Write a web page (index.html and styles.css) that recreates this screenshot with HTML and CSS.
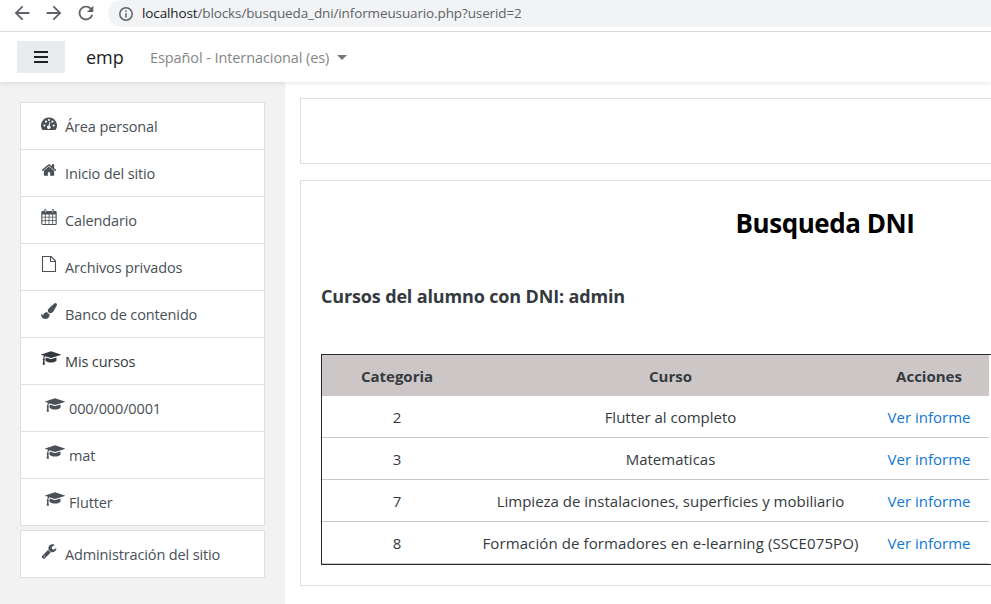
FILE: index.html
```html
<!DOCTYPE html>
<html lang="es">
<head>
<meta charset="utf-8">
<title>Busqueda DNI</title>
<link rel="stylesheet" href="styles.css">
</head>
<body>
<svg width="0" height="0" class="defs">
<symbol id="cap" viewBox="0 0 2304 1792"><path d="M1774 836l18 316q4 69-82 128t-235 93.500-323 34.500-323-34.500-235-93.500-82-128l18-316 574 181q22 7 48 7t48-7zm530-324q0 23-22 31l-1120 352q-4 1-10 1t-10-1l-652-206q-43 34-71 111.500t-34 178.500q63 36 63 109 0 69-58 107l58 433q2 14-8 25-9 11-24 11h-192q-15 0-24-11-10-11-8-25l58-433q-58-38-58-107 0-73 65-111 11-207 98-330l-333-104q-22-8-22-31t22-31l1120-352q4-1 10-1t10 1l1120 352q22 8 22 31z"/></symbol>
</svg>
<header class="browser">
  <svg class="tool" viewBox="0 0 24 24"><path d="M20 11H7.830l5.590-5.590L12 4l-8 8 8 8 1.410-1.410L7.830 13H20z"/></svg>
  <svg class="tool" viewBox="0 0 24 24"><path d="M4 11h12.170l-5.590-5.590L12 4l8 8-8 8-1.410-1.410L16.170 13H4z"/></svg>
  <svg class="tool" viewBox="0 0 24 24"><path d="M17.650 6.350C16.200 4.900 14.210 4 12 4c-4.420 0-7.990 3.580-7.990 8s3.570 8 7.990 8c3.730 0 6.840-2.550 7.730-6h-2.080c-.82 2.330-3.040 4-5.650 4-3.310 0-6-2.690-6-6s2.690-6 6-6c1.660 0 3.140.69 4.220 1.780L13 11h7V4z"/></svg>
  <div class="address">
    <svg class="info" viewBox="0 0 14 14"><circle cx="7" cy="7" r="6.200" fill="none" stroke="#5f6368" stroke-width="1.500"/><path d="M6.250 6.200h1.500v4.200h-1.500zM6.250 3.500h1.500V5h-1.500z"/></svg>
    <span class="url"><b>localhost</b>/blocks/busqueda_dni/informeusuario.php?userid=2</span>
  </div>
</header>
<nav class="navbar">
  <button class="burger"><i></i><i></i><i></i></button>
  <a class="brand">emp</a>
  <a class="lang">Español - Internacional (es)</a>
</nav>
<div class="page">
  <aside class="drawer">
    <ul class="list">
      <li><svg viewBox="0 -1 16 16"><path fill-rule="evenodd" d="M8 1.500a8 8 0 0 0-6.700 12.300q.2.300.6.300h12.200q.4 0 .6-.3A8 8 0 0 0 8 1.500zM3.400 8.400a1.100 1.100 0 1 1 0 2.200 1.100 1.100 0 0 1 0-2.200zM5 4.500a1.100 1.100 0 1 1 0 2.200 1.100 1.100 0 0 1 0-2.200zM8 2.900a1.100 1.100 0 1 1 0 2.200 1.100 1.100 0 0 1 0-2.200zM11.400 4.500a1.100 1.100 0 1 1 0 2.200 1.100 1.100 0 0 1 0-2.200zM12.700 8.400a1.100 1.100 0 1 1 0 2.200 1.100 1.100 0 0 1 0-2.200zM8.500 6l.9.200-.8 3.500a1.700 1.700 0 1 1-1-.2z"/></svg><span>Área personal</span></li>
      <li><svg viewBox="0 0 1792 1792"><path d="M1472 992v480q0 26-19 45t-45 19h-384v-384h-256v384h-384q-26 0-45-19t-19-45v-480q0-1 .5-3t.5-3l575-474 575 474q1 2 1 6zm223-69l-62 74q-8 9-21 11h-3q-13 0-21-7l-692-577-692 577q-12 8-24 7-13-2-21-11l-62-74q-8-10-7-23.500t11-21.500l719-599q32-26 76-26t76 26l244 204v-195q0-14 9-23t23-9h192q14 0 23 9t9 23v408l219 182q10 8 11 21.500t-7 23.500z"/></svg><span>Inicio del sitio</span></li>
      <li><svg viewBox="0 0 16 16"><path fill-rule="evenodd" d="M1.500 2h1.700V1q0-1 1-1t1 1v1h5.600V1q0-1 1-1t1 1v1h1.700q1.200 0 1.200 1.200v11.600q0 1.200-1.200 1.200h-12Q.3 16 .3 14.800V3.200Q.3 2 1.500 2zM1.400 5.400v2.400h2.500V5.400zM4.700 5.400v2.400h2.900V5.400zM8.400 5.400v2.400h2.900V5.400zM12.100 5.400v2.400h2.500V5.400zM1.400 8.600v2.600h2.500V8.600zM4.700 8.600v2.600h2.900V8.600zM8.400 8.600v2.600h2.900V8.600zM12.100 8.600v2.600h2.500V8.600zM1.400 12v2.900h2.500V12zM4.700 12v2.900h2.900V12zM8.400 12v2.900h2.900V12zM12.100 12v2.900h2.500V12zM3.900 1v2.500h.7V1zM11.400 1v2.500h.7V1z"/></svg><span>Calendario</span></li>
      <li><svg viewBox="0 0 16 16"><path fill="none" stroke="#495057" stroke-width="1.100" stroke-linejoin="round" d="M1.500.500h8.500l4.500 4.500v10.500h-13zM9.500.500v5h5"/></svg><span>Archivos privados</span></li>
      <li><svg viewBox="0 0 1792 1792"><path d="M1615 0q70 0 122.500 46.500t52.500 116.500q0 63-45 151-332 629-465 752-97 91-218 91-126 0-216.500-92.500t-90.500-219.500q0-128 92-212l638-579q59-54 130-54zm-909 1034q39 76 106.500 130t150.500 76l1 71q4 213-129.500 347t-348.500 134q-123 0-218-46.500t-152.500-127.500-86.500-183-29-220q7 5 41 30t62 44.500 59 36.500 46 17q41 0 55-37 25-66 57.500-112.500t69.500-76 88-47.500 103-25.500 125-10.500z"/></svg><span>Banco de contenido</span></li>
      <li class="dark"><svg class="cap"><use href="#cap"/></svg><span>Mis cursos</span></li>
      <li class="sub"><svg class="cap"><use href="#cap"/></svg><span>000/000/0001</span></li>
      <li class="sub"><svg class="cap"><use href="#cap"/></svg><span>mat</span></li>
      <li class="sub"><svg class="cap"><use href="#cap"/></svg><span>Flutter</span></li>
    </ul>
    <ul class="list">
      <li><svg viewBox="0 0 1792 1792"><path d="M448 1472q0-26-19-45t-45-19-45 19-19 45 19 45 45 19 45-19 19-45zm644-420l-682 682q-37 37-90 37-52 0-91-37l-106-108q-38-36-38-90 0-53 38-91l681-681q39 98 114.500 173.500t173.500 114.500zm634-435q0 39-23 106-47 134-164.500 217.500t-258.500 83.500q-185 0-316.500-131.500t-131.500-316.500 131.500-316.500 316.500-131.500q58 0 121.500 16.500t107.500 46.500q16 11 16 28t-16 28l-293 169v224l193 107q5-3 79-48.500t135.500-81 70.500-35.500q15 0 23.500 10t8.500 25z"/></svg><span>Administración del sitio</span></li>
    </ul>
  </aside>
  <main class="content">
    <section class="card top"></section>
    <section class="card report">
      <h2>Busqueda DNI</h2>
      <h4>Cursos del alumno con DNI: admin</h4>
      <table>
        <colgroup><col class="c1"><col class="c2"><col class="c3"><col class="c4"></colgroup>
        <thead><tr><th>Categoria</th><th>Curso</th><th>Acciones</th></tr></thead>
        <tbody>
          <tr><td>2</td><td>Flutter al completo</td><td><a>Ver informe</a></td></tr>
          <tr><td>3</td><td>Matematicas</td><td><a>Ver informe</a></td></tr>
          <tr><td>7</td><td>Limpieza de instalaciones, superficies y mobiliario</td><td><a>Ver informe</a></td></tr>
          <tr><td>8</td><td class="wide">Formación de formadores en e-learning (SSCE075PO)</td><td><a>Ver informe</a></td></tr>
        </tbody>
      </table>
    </section>
  </main>
</div>
</body>
</html>
```
FILE: styles.css
```css
* { box-sizing: border-box; }
body { margin: 0; height: 604px; overflow: hidden; background: #fff; color: #343a40; font: 15px/22px "Open Sans", "Noto Sans", sans-serif; }
.defs { display: block; }
.browser { height: 32px; border-bottom: 1px solid #dadce0; display: flex; padding-left: 11px; align-items: flex-start; }
.tool { width: 22px; height: 22px; margin: 2px 10px 0 0; fill: #5f6368; flex: none; }
.address { flex: 1; height: 27px; margin-left: 1px; background: #f1f3f4; border-radius: 14px 0 0 14px; display: flex; align-items: center; padding-left: 11px; color: #5f6368; font-size: 13.5px; letter-spacing: -.12px; white-space: nowrap; }
.info { width: 14px; height: 14px; fill: #5f6368; margin-right: 9px; }
.url { margin-top: -1px; }
.url b { font-weight: 400; color: #202124; }
.navbar { height: 50px; display: flex; align-items: center; background: #fff; padding-left: 17px; position: relative; z-index: 1; box-shadow: 0 2px 4px rgba(0,0,0,.08); }
.burger { width: 48px; height: 32px; border: 0; background: #e9ecef; padding: 0; display: flex; flex-direction: column; align-items: center; justify-content: center; gap: 3px; }
.burger i { width: 14px; height: 2px; background: #1d2125; }
.brand { margin-left: 21px; width: 64px; font-size: 18px; color: #1d2125; }
.lang { color: #868686; display: flex; align-items: center; font-size: 14.5px; letter-spacing: -.09px; margin-top: 1px; }
.lang::after { content: ""; margin-left: 8px; border: 5px solid transparent; border-top-color: #777; border-bottom: 0; }
.page { display: flex; height: 522px; }
.drawer { width: 285px; background: #f2f2f2; padding: 20px; }
.list { list-style: none; margin: 0 0 4px; padding: 0; border: 1px solid #dedfdf; background: #fff; width: 245px; }
.list li { height: 47px; border-bottom: 1px solid #dedfdf; display: flex; padding: 12px 0 0 20px; color: #495057; fill: #495057; white-space: nowrap; font-size: 14.5px; letter-spacing: -.13px; }
.list li:last-child { border-bottom: 0; height: 46px; }
.list span { padding-top: 1px; }
.list svg { width: 16px; height: 16px; margin-right: 8px; flex: none; }
.list .cap { width: 20px; margin-right: 4px; }
.list .sub { padding-left: 24px; }
.list .dark { color: #343a40; fill: #343a40; }
.content { padding: 16px 0 0 15px; flex: 1; min-width: 0; }
.card { border: 1px solid #dedfdf; border-right: 0; }
.top { height: 66px; margin-bottom: 16px; }
.report { height: 406px; padding: 20px 0 0 20px; overflow: hidden; }
h2 { margin: 0 0 0 339px; width: 330px; text-align: center; color: #000; font-size: 26px; line-height: 44px; letter-spacing: -.45px; }
h4 { margin: 39px 0 46px; font-size: 18px; line-height: 24px; letter-spacing: -.15px; }
table { width: 680px; border: 1px solid #282b2e; border-collapse: separate; border-spacing: 0; table-layout: fixed; text-align: center; }
.c1 { width: 150px; }
.c2 { width: 397px; }
.c3 { width: 120px; }
.c4 { width: 11px; }
th { height: 41px; padding: 1px 0 0; background: #cdc6c6; }
td { height: 42px; padding: 1px 0 0; border-bottom: 1px solid #c8c8c8; }
td.wide { letter-spacing: .1px; }
td a { color: #1177d1; }
```
